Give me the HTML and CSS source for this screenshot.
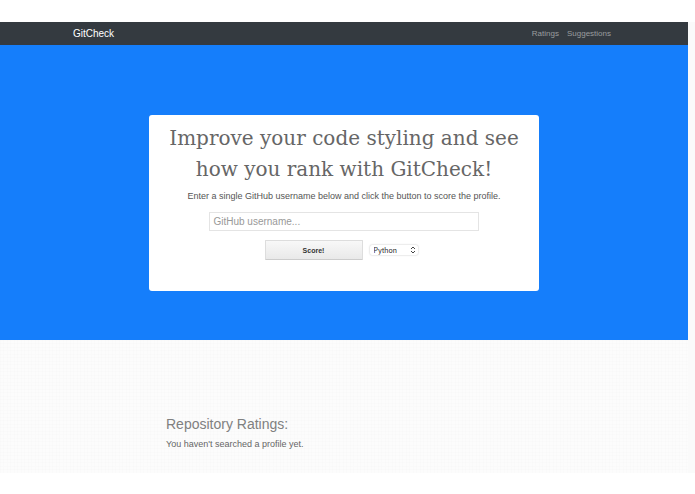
FILE: index.html
```html
<!DOCTYPE html>
<html lang="en">
<head>
<meta charset="utf-8">
<title>GitCheck</title>
<link rel="stylesheet" href="styles.css">
</head>
<body>
<div class="page">
  <nav class="navbar">
    <a class="brand" href="#">GitCheck</a>
    <div class="links">
      <a href="#ratings">Ratings</a>
      <a href="#suggestions">Suggestions</a>
    </div>
  </nav>
  <header class="hero">
    <form class="card">
      <h1>Improve your code styling and see<br>how you rank with GitCheck!</h1>
      <label class="lead" for="username">Enter a single GitHub username below and click the button to score the profile.</label>
      <input class="username" id="username" type="text" placeholder="GitHub username...">
      <div class="controls">
        <button class="score" type="button">Score!</button>
        <div class="language">
          <select aria-label="Language"><option>Python</option></select>
          <svg class="arrows" viewBox="0 0 6 8" aria-hidden="true"><path d="M1 3 3 1 5 3M1 5 3 7 5 5"/></svg>
        </div>
      </div>
    </form>
  </header>
  <main class="ratings" id="ratings">
    <h2>Repository Ratings:</h2>
    <p>You haven't searched a profile yet.</p>
  </main>
</div>
</body>
</html>
```
FILE: styles.css
```css
* { box-sizing: border-box; }

body {
  margin: 0;
  padding: 22px 0 20px;
  background: #fff;
  color: #666;
  font-family: "Liberation Sans", Arial, sans-serif;
}

h1, h2, p { margin: 0; font-weight: 400; }

.page {
  border-right: 7px solid #fafafa;
  background: #fcfcfc;
}

.navbar {
  display: flex;
  align-items: center;
  justify-content: space-between;
  height: 23px;
  padding: 0 77px 0 73px;
  background: #343a40;
}

.navbar a { color: #9a9d9f; font-size: 8px; text-decoration: none; }
.navbar .brand { color: #fff; font-size: 10px; }
.links { display: flex; gap: 8px; }

.hero {
  padding: 70px 149px 49px;
  background: #157efb;
}

.card {
  display: flex;
  flex-direction: column;
  align-items: center;
  padding: 8px 0 31px;
  border-radius: 3px;
  background: #fff;
}

h1 {
  font-family: "DejaVu Serif", serif;
  font-size: 20px;
  line-height: 31px;
  text-align: center;
  white-space: nowrap;
}

.lead {
  margin-top: 5px;
  color: #555;
  font-size: 9px;
  line-height: 12px;
  white-space: nowrap;
}

.username {
  width: 69%;
  height: 19px;
  margin-top: 10px;
  padding: 0 3px;
  border: 1px solid #e4e4e4;
  background: #fff;
  font: 10px "Liberation Sans", Arial, sans-serif;
}

.username::placeholder { color: #999; opacity: 1; }

.controls {
  display: flex;
  align-items: center;
  gap: 7px;
  margin: 9px 6px 0 0;
}

.score {
  width: 98px;
  height: 20px;
  padding: 0;
  border: 1px solid #ddd;
  border-bottom-color: #ccc;
  border-radius: 1px;
  background: linear-gradient(#f8f8f8, #e9e9e9);
  color: #333;
  font: bold 7px "Liberation Sans", Arial, sans-serif;
}

.language { display: grid; align-items: center; }

.language select {
  grid-area: 1 / 1;
  width: 48px;
  height: 10px;
  padding: 0 4px;
  border: 0;
  border-radius: 2px;
  background: #fff;
  box-shadow: 0 0 2px #bbb;
  color: #222;
  font: 7px Inter, sans-serif;
  appearance: none;
}

.arrows {
  grid-area: 1 / 1;
  justify-self: end;
  width: 6px;
  height: 8px;
  margin-right: 2px;
  fill: none;
  stroke: #444;
  stroke-width: 1;
  pointer-events: none;
}

.ratings {
  min-height: 133px;
  padding: 73px 166px 20px;
  background:
    repeating-linear-gradient(90deg, rgba(0, 0, 0, 0.008) 0 1px, transparent 1px 3px, rgba(0, 0, 0, 0.006) 3px 4px, transparent 4px 7px),
    repeating-linear-gradient(rgba(0, 0, 0, 0.008) 0 1px, transparent 1px 3px, rgba(0, 0, 0, 0.006) 3px 4px, transparent 4px 7px),
    #fcfcfc;
}

h2 { color: #808080; font-size: 14px; line-height: 22px; }
.ratings p { margin-top: 2px; font-size: 9px; line-height: 14px; }
```
